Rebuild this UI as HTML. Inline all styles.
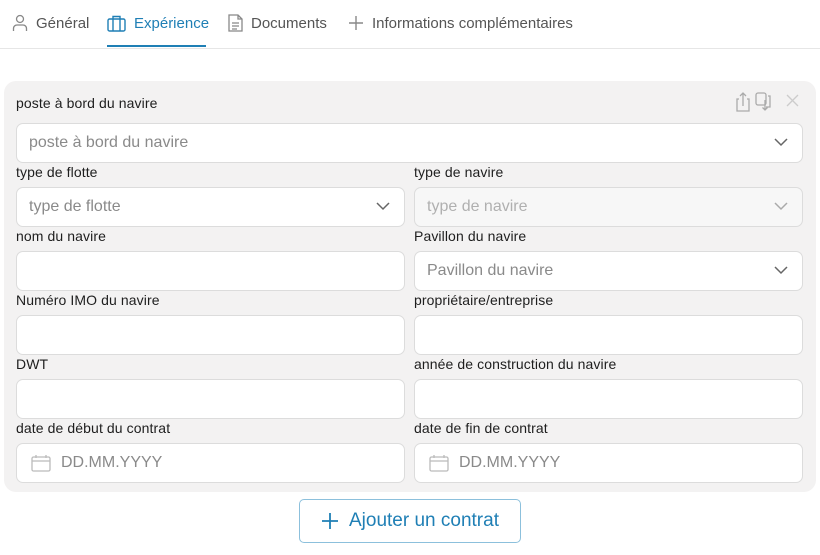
<!DOCTYPE html>
<html><head><meta charset="utf-8"><style>
*{box-sizing:border-box;margin:0;padding:0}
body{width:820px;height:555px;background:#fff;font-family:"Liberation Sans",sans-serif;position:relative;overflow:hidden;color:#333}
.a{position:absolute}
.tab{position:absolute;top:14px;font-size:15px;color:#555;display:flex;align-items:center;gap:8px;height:18px}
.card{position:absolute;left:4px;top:81px;width:812px;height:411px;background:#f3f2f2;border-radius:12px}
.lbl{position:absolute;font-size:14px;color:#1e1e1e;letter-spacing:0.1px}
.in{position:absolute;height:40px;background:#fff;border:1px solid #dcdcdc;border-radius:7px;font-size:16px;color:#8a8a8a;padding-left:12px;display:flex;align-items:center}
.dis{background:#f7f7f7;color:#b0b0b0}
.chev{position:absolute;right:14px;top:14px}
</style></head><body>
<div class="tab" style="left:12px"><svg width="16" height="18" viewBox="0 0 16 18" fill="none" stroke="#888" stroke-width="1.3"><circle cx="8" cy="5" r="3.5"/><path d="M1.5 17v-2.5c0-2 1.5-3.5 3.5-3.5h6c2 0 3.5 1.5 3.5 3.5V17"/></svg>Général</div>
<div class="tab" style="left:107px;color:#1f7fb5"><svg width="19" height="17" viewBox="0 0 19 17" fill="none" stroke="#1f7fb5" stroke-width="1.4"><rect x="1" y="4" width="17" height="12" rx="1.5"/><path d="M6 4V1.5h7V4M6 4v12M13 4v12"/></svg>Expérience</div>
<div class="a" style="left:107px;top:45px;width:99px;height:2px;background:#1f7fb5"></div>
<div class="tab" style="left:228px"><svg width="15" height="18" viewBox="0 0 15 18" fill="none" stroke="#888" stroke-width="1.3"><path d="M1 1h9l4 4v12H1z M10 1v4h4 M4 9h7 M4 12h7 M4 15h5"/></svg>Documents</div>
<div class="tab" style="left:348px"><svg width="16" height="16" viewBox="0 0 16 16" stroke="#888" stroke-width="1.4"><path d="M8 1v14M1 8h14"/></svg>Informations complémentaires</div>
<div class="a" style="left:0;top:48px;width:820px;height:1px;background:#e6e6e6"></div>

<div class="card"></div>
<svg class="a" style="left:734px;top:90px" width="68" height="24" viewBox="0 0 68 24" fill="none" stroke="#aaa" stroke-width="1.3"><path d="M5 9h-2v12h12v-12h-2M9 16V3M6 6l3-3 3 3"/><rect x="22" y="3" width="10" height="12" rx="2"/><path d="M34 6h2v11h-4M31 10v10M28.5 17.5l2.5 2.5 2.5-2.5"/><path d="M53 5l11 11M64 5L53 16" stroke="#ccc"/></svg>

<div class="lbl" style="left:16px;top:95px">poste à bord du navire</div>
<div class="in" style="left:16px;top:123px;width:787px">poste à bord du navire<svg class="chev" width="14" height="9" viewBox="0 0 14 9" fill="none" stroke="#666" stroke-width="1.5"><path d="M1 1l6 6 6-6"/></svg></div>

<div class="lbl" style="left:16px;top:164px">type de flotte</div>
<div class="lbl" style="left:414px;top:164px">type de navire</div>
<div class="in" style="left:16px;top:187px;width:389px">type de flotte<svg class="chev" width="14" height="9" viewBox="0 0 14 9" fill="none" stroke="#666" stroke-width="1.5"><path d="M1 1l6 6 6-6"/></svg></div>
<div class="in dis" style="left:414px;top:187px;width:389px">type de navire<svg class="chev" width="14" height="9" viewBox="0 0 14 9" fill="none" stroke="#aaa" stroke-width="1.5"><path d="M1 1l6 6 6-6"/></svg></div>

<div class="lbl" style="left:16px;top:228px">nom du navire</div>
<div class="lbl" style="left:414px;top:228px">Pavillon du navire</div>
<div class="in" style="left:16px;top:251px;width:389px"></div>
<div class="in" style="left:414px;top:251px;width:389px">Pavillon du navire<svg class="chev" width="14" height="9" viewBox="0 0 14 9" fill="none" stroke="#666" stroke-width="1.5"><path d="M1 1l6 6 6-6"/></svg></div>

<div class="lbl" style="left:16px;top:292px">Numéro IMO du navire</div>
<div class="lbl" style="left:414px;top:292px">propriétaire/entreprise</div>
<div class="in" style="left:16px;top:315px;width:389px"></div>
<div class="in" style="left:414px;top:315px;width:389px"></div>

<div class="lbl" style="left:16px;top:356px">DWT</div>
<div class="lbl" style="left:414px;top:356px">année de construction du navire</div>
<div class="in" style="left:16px;top:379px;width:389px"></div>
<div class="in" style="left:414px;top:379px;width:389px"></div>

<div class="lbl" style="left:16px;top:420px">date de début du contrat</div>
<div class="lbl" style="left:414px;top:420px">date de fin de contrat</div>
<div class="in" style="left:16px;top:443px;width:389px;padding-left:14px"><svg width="20" height="18" viewBox="0 0 20 18" fill="none" stroke="#bbb" stroke-width="1.3" style="margin-right:10px"><rect x="1" y="3" width="18" height="14" rx="1.5"/><path d="M1 7h18M5 1v3M15 1v3"/></svg>DD.MM.YYYY</div>
<div class="in" style="left:414px;top:443px;width:389px;padding-left:14px"><svg width="20" height="18" viewBox="0 0 20 18" fill="none" stroke="#bbb" stroke-width="1.3" style="margin-right:10px"><rect x="1" y="3" width="18" height="14" rx="1.5"/><path d="M1 7h18M5 1v3M15 1v3"/></svg>DD.MM.YYYY</div>

<div class="a" style="left:299px;top:499px;width:222px;height:44px;border:1px solid #8cc0dc;border-radius:5px;display:flex;align-items:center;justify-content:center;gap:10px;color:#1f7fb5;font-size:19px"><svg width="18" height="18" viewBox="0 0 18 18" stroke="#1f7fb5" stroke-width="1.8"><path d="M9 1v16M1 9h16"/></svg>Ajouter un contrat</div>
</body></html>
